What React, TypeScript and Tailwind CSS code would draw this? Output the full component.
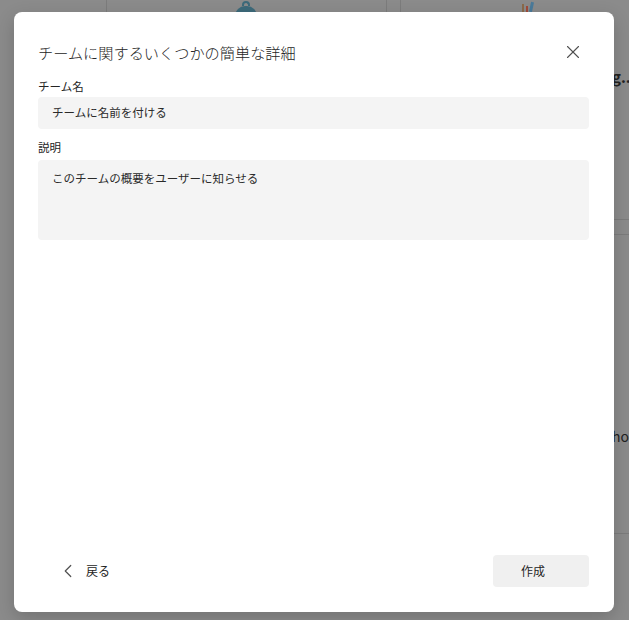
import { X, ChevronLeft } from 'lucide-react'

const FONT = '"Noto Sans CJK JP", "Noto Sans", sans-serif'

export default function App() {
  return (
    <div
      className="relative w-[629px] h-[620px] overflow-hidden bg-[#8b8b8b]"
      style={{ fontFamily: FONT }}
    >
      {/* Page behind the overlay */}
      <div className="absolute inset-0">
        <div className="absolute left-[106px] top-0 h-[12px] w-px bg-[#7c7c7c]" />
        <div className="absolute left-[386px] top-0 h-[12px] w-px bg-[#7c7c7c]" />
        <div className="absolute left-[400px] top-0 h-[12px] w-px bg-[#7c7c7c]" />
        <div className="absolute left-[235px] top-[1px] w-[22px] h-[12px]">
          <div className="mx-auto w-[8px] h-[5px] border-2 border-b-0 border-[#3d6a7a] rounded-t-sm" />
          <div className="w-[22px] h-[10px] rounded-t-full bg-[#3d6a7a]" />
        </div>
        <div className="absolute left-[522px] top-[2px] flex items-end gap-[2px]">
          <div className="w-[2px] h-[8px] bg-[#8a6a4a]" />
          <div className="w-[2px] h-[6px] bg-[#a04a3a]" />
          <div className="w-[3px] h-[10px] bg-[#4a7a9a] rotate-12" />
        </div>
        <div className="absolute left-[612px] top-[66px] text-[15px] font-bold text-[#222]">g..</div>
        <div className="absolute left-[614px] top-[219px] w-[20px] h-px bg-[#7c7c7c]" />
        <div className="absolute left-[614px] top-[234px] w-[20px] h-px bg-[#7c7c7c]" />
        <div className="absolute left-[612px] top-[426px] text-[14px] text-[#222]">ho</div>
        <div className="absolute left-[614px] top-[533px] w-[20px] h-px bg-[#7c7c7c]" />
      </div>

      <div className="relative pt-[12px] pl-[14px]">
        <div className="w-[600px] h-[600px] bg-white rounded-[8px] shadow-[0_6px_18px_rgba(0,0,0,0.18)] flex flex-col pt-[24px] pl-[24px] pr-[25px] pb-[25px]">
          {/* Title */}
          <div className="h-[32px] flex items-center justify-between">
            <h2 className="text-[15.2px] leading-[20px] font-light text-[#242424]">チームに関するいくつかの簡単な詳細</h2>
            <button className="w-[32px] h-[32px] flex items-center justify-center text-[#505050]">
              <X size={22} strokeWidth={1.2} />
            </button>
          </div>

          <label className="mt-[10px] h-[18px] flex items-center text-[11.5px] text-[#242424]">チーム名</label>
          <div className="mt-px h-[32px] rounded-[4px] bg-[#f4f4f4] flex items-center px-[14px] text-[11.5px] text-[#2a2a2a]">
            チームに名前を付ける
          </div>

          <label className="mt-[10px] h-[18px] flex items-center text-[11.5px] text-[#242424]">説明</label>
          <div className="mt-[3px] h-[80px] rounded-[4px] bg-[#f4f4f4] px-[14px] pt-[10px] text-[11.5px] leading-[16px] text-[#2a2a2a]">
            このチームの概要をユーザーに知らせる
          </div>

          <div className="flex-1" />

          {/* Footer */}
          <div className="h-[32px] flex items-center justify-between">
            <button className="flex items-center gap-[7px] pl-[19px] text-[12px] text-[#242424]">
              <ChevronLeft size={22} strokeWidth={1.3} className="text-[#505050]" />
              <span>戻る</span>
            </button>
            <button className="w-[96px] h-[32px] rounded-[4px] bg-[#f0f0f0] flex items-center pl-[28px] text-[12px] text-[#242424]">
              作成
            </button>
          </div>
        </div>
      </div>
    </div>
  )
}
